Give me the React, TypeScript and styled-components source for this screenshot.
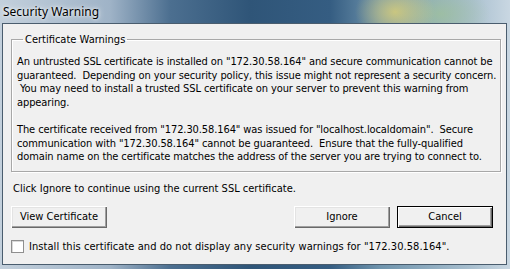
import React from "react";
import styled, { createGlobalStyle } from "styled-components";

const Global = createGlobalStyle`
  html, body { margin: 0; padding: 0; }
  body { width: 510px; height: 269px; overflow: hidden; background: #b9c9d9; }
`;

const UI = `"DejaVu Sans Condensed", Tahoma, "Liberation Sans", sans-serif`;

const Window = styled.div`
  width: 510px;
  height: 269px;
  display: flex;
  flex-direction: column;
  background:
    radial-gradient(ellipse 40px 30px at 395px 12px, rgba(215, 205, 120, 0.85), rgba(215, 205, 120, 0) 100%),
    radial-gradient(ellipse 50px 30px at 440px 14px, rgba(160, 195, 150, 0.7), rgba(160, 195, 150, 0) 100%),
    linear-gradient(90deg, #c3d0dc 0px, #9fb3c7 110px, #4c6f90 170px, #2f5578 250px, #355d82 330px, #6f94ad 380px, #a8bfcf 470px, #c9d7e2 510px);
  box-sizing: border-box;
`;

const TitleBar = styled.div`
  height: 23px;
  flex: none;
  display: flex;
  align-items: center;
  padding-left: 3px;
  font-family: "Noto Sans", "Segoe UI", sans-serif;
  font-size: 12px;
  color: #000;
  text-shadow: 0 0 6px rgba(255, 255, 255, 0.9), 0 0 3px rgba(255, 255, 255, 0.9);
`;

const Client = styled.div`
  margin: 0 3px 4px 2px;
  flex: 1;
  background: #f0f0f0;
  border: 1px solid #4a5d6e;
  padding: 9px 9px 0 8px;
  display: flex;
  flex-direction: column;
  font-family: ${UI};
  font-size: 11px;
  color: #000;
`;

const Group = styled.fieldset`
  margin: 0;
  padding: 9px 4px 7px 5px;
  border: 1px solid #a8a8a8;
  box-shadow: inset 1px 1px 0 #fff, 1px 1px 0 #fff;
  border-radius: 0;
`;

const Legend = styled.legend`
  padding: 0 2px;
  margin-left: 6px;
  font-size: 11px;
`;

const Para = styled.p`
  margin: 0 0 14px 0;
  line-height: 13.5px;
  white-space: pre;
  letter-spacing: -0.1px;
  &:last-child { margin-bottom: 0; }
`;

const Note = styled.div`
  margin: 10px 0 0 2px;
  line-height: 13px;
`;

const ButtonRow = styled.div`
  display: flex;
  align-items: center;
  margin-top: 11px;
  padding-right: 4px;
`;

const Spacer = styled.div`
  flex: 1;
`;

const Button = styled.button<{ $default?: boolean }>`
  width: 96px;
  height: 22px;
  margin-left: ${(p) => (p.$default ? "7px" : "0")};
  font-family: ${UI};
  font-size: 11px;
  color: #000;
  background: #f0f0f0;
  padding: 0;
  border: ${(p) => (p.$default ? "1px solid #000" : "none")};
  box-shadow: ${(p) =>
    p.$default
      ? "inset 1px 1px 0 #fff, inset -1px -1px 0 #696969, inset -2px -2px 0 #a0a0a0"
      : "inset 1px 1px 0 #fff, inset -1px -1px 0 #696969, inset -2px -2px 0 #a0a0a0, inset 2px 2px 0 #e3e3e3"};
`;

const CheckRow = styled.label`
  display: flex;
  align-items: center;
  margin-top: 12px;
  margin-left: 0;
  gap: 5px;
`;

const Box = styled.span`
  width: 11px;
  height: 11px;
  background: #fff;
  border: 1px solid #8f8f8f;
  box-shadow: inset 1px 1px 0 #d9d9d9;
  flex: none;
`;

const CheckText = styled.span`
  letter-spacing: 0.06px;
`;

export default function App() {
  return (
    <>
      <Global />
      <Window>
        <TitleBar>Security Warning</TitleBar>
        <Client>
          <Group>
            <Legend>Certificate Warnings</Legend>
            <Para>
              {`An untrusted SSL certificate is installed on "172.30.58.164" and secure communication cannot be
guaranteed.  Depending on your security policy, this issue might not represent a security concern.
 You may need to install a trusted SSL certificate on your server to prevent this warning from
appearing.`}
            </Para>
            <Para>
              {`The certificate received from "172.30.58.164" was issued for "localhost.localdomain".  Secure
communication with "172.30.58.164" cannot be guaranteed.  Ensure that the fully-qualified
domain name on the certificate matches the address of the server you are trying to connect to.`}
            </Para>
          </Group>
          <Note>Click Ignore to continue using the current SSL certificate.</Note>
          <ButtonRow>
            <Button>View Certificate</Button>
            <Spacer />
            <Button>Ignore</Button>
            <Button $default>Cancel</Button>
          </ButtonRow>
          <CheckRow>
            <Box />
            <CheckText>Install this certificate and do not display any security warnings for "172.30.58.164".</CheckText>
          </CheckRow>
        </Client>
      </Window>
    </>
  );
}
